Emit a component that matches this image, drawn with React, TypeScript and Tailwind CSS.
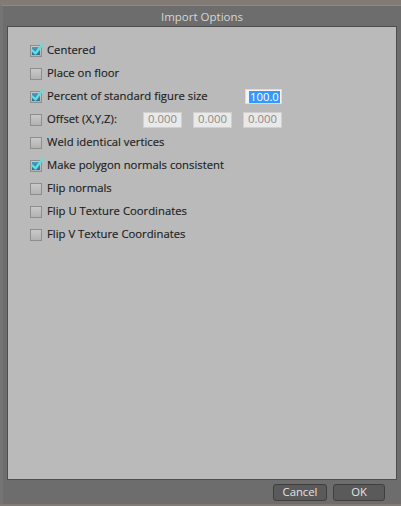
import { useState } from 'react';

interface Option {
  id: string;
  label: string;
  checked: boolean;
}

function CheckBox({ checked }: { checked: boolean }) {
  return (
    <span className="relative w-[12px] h-[12px] shrink-0 border border-[#8e8e8e] bg-gradient-to-b from-[#c9c9c9] to-[#b2b2b2]">
      {checked && (
        <>
          <span className="absolute inset-[1px] bg-gradient-to-b from-[#4f9bbd] to-[#2f6f93]" />
          <svg className="absolute left-[-1px] top-[-4px]" width="15" height="15" viewBox="0 0 15 15">
            <path d="M2.5 8.5 L5.5 11.5 L12.5 2" fill="none" stroke="#5fe0e0" strokeWidth="2.4" strokeLinecap="round" strokeLinejoin="round" />
          </svg>
        </>
      )}
    </span>
  );
}

export default function App() {
  const [options] = useState<Option[]>([
    { id: 'centered', label: 'Centered', checked: true },
    { id: 'floor', label: 'Place on floor', checked: false },
    { id: 'percent', label: 'Percent of standard figure size', checked: true },
    { id: 'offset', label: 'Offset (X,Y,Z):', checked: false },
    { id: 'weld', label: 'Weld identical vertices', checked: false },
    { id: 'normals', label: 'Make polygon normals consistent', checked: true },
    { id: 'flip', label: 'Flip normals', checked: false },
    { id: 'flipu', label: 'Flip U Texture Coordinates', checked: false },
    { id: 'flipv', label: 'Flip V Texture Coordinates', checked: false },
  ]);

  return (
    <div className="w-[401px] h-[506px] bg-[#827a75] pt-[5px] pb-[2px] flex flex-col font-['Open_Sans',sans-serif]">
      <div className="flex-1 flex flex-col bg-[#6d6d6d] border-t border-[#8a8a8a] border-l-[3px] border-l-[#747474] pr-[4px] pl-[4px]">
        <div className="h-[20px] pt-[1px] flex items-center justify-center text-[11.5px] text-[#d6d6d6]">
          Import Options
        </div>
        <div className="flex-1 bg-[#bababa] border border-[#4e4e4e] pt-[12px] pl-[22px]">
          {options.map((opt) => (
            <div key={opt.id} className="h-[23px] flex items-center">
              <CheckBox checked={opt.checked} />
              <span
                className={`ml-[5px] text-[11.3px] text-[#1c1c1c] [-webkit-text-stroke:0.15px_#1c1c1c] ${
                  opt.id === 'offset' ? 'w-[96px]' : ''
                }`}
              >
                {opt.label}
              </span>
              {opt.id === 'percent' && (
                <span className="ml-auto mr-[114px] w-[37px] h-[15px] bg-[#f4f4f4] border border-[#dcdcdc] flex items-center pl-[3px]">
                  <span className="bg-[#3399ff] text-white text-[11.3px] leading-[12px] px-[1px]">100.0</span>
                </span>
              )}
              {opt.id === 'offset' && (
                <div className="flex gap-[11px]">
                  {['0.000', '0.000', '0.000'].map((v, i) => (
                    <span key={i} className="w-[39px] h-[16px] bg-[#e9e9e9] border border-[#d0d0d0] text-[11.3px] text-[#8a8a8a] flex items-center justify-center">
                      {v}
                    </span>
                  ))}
                </div>
              )}
            </div>
          ))}
        </div>
        <div className="h-[24px] flex items-center justify-end gap-[6px] pr-[12px]">
          <button className="w-[54px] h-[17px] rounded-[3px] bg-[#5a5a5a] border border-[#3f3f3f] text-[11.3px] text-[#e4e4e4] leading-none">
            Cancel
          </button>
          <button className="w-[52px] h-[17px] rounded-[3px] bg-[#5a5a5a] border border-[#3f3f3f] text-[11.3px] text-[#e4e4e4] leading-none">
            OK
          </button>
        </div>
      </div>
    </div>
  );
}
